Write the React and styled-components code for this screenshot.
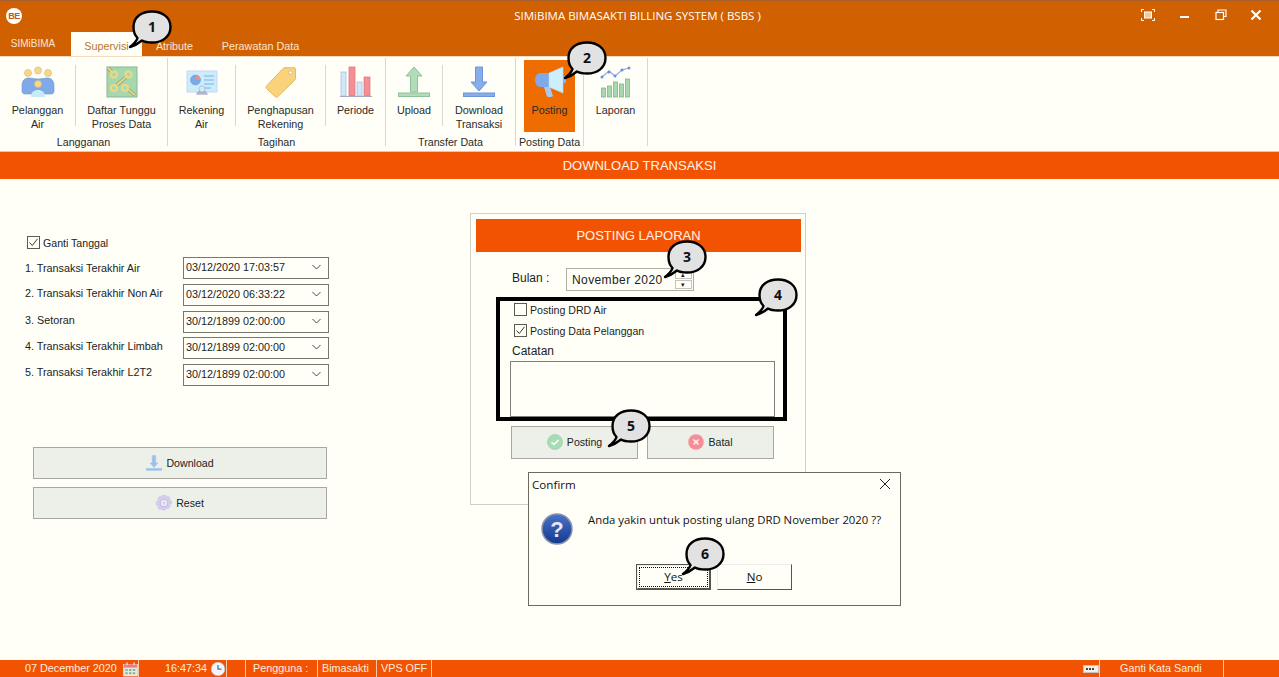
import React from 'react'
import styled, { createGlobalStyle } from 'styled-components'

const GlobalStyle = createGlobalStyle`
  html, body { margin: 0; padding: 0; background: #fffff8; }
  * { box-sizing: border-box; }
  body { font-family: "Liberation Sans", Arial, sans-serif; font-size: 11px; color: #1c1c1c; }
`

const Page = styled.div`
  position: relative;
  width: 1279px;
  height: 677px;
  overflow: hidden;
  display: flex;
  flex-direction: column;
  background: #fffff8;
`

/* title + tabs */
const TitleArea = styled.header`
  height: 56px;
  background: #d06000;
  border-top: 1px solid #a8602c;
  display: flex;
  flex-direction: column;
  flex: none;
`
const TitleRow = styled.div`
  height: 31px;
  display: flex;
  align-items: center;
  padding: 0 18px 2px 6px;
`
const Logo = styled.div`
  width: 16px;
  height: 16px;
  border-radius: 50%;
  background: #fff;
  color: #d4500c;
  font-size: 9px;
  font-weight: 700;
  text-align: center;
  line-height: 16px;
  letter-spacing: -0.5px;
  flex: none;
`
const TitleText = styled.div`
  flex: 1;
  text-align: center;
  color: #fff;
  font-family: "Open Sans", sans-serif;
  font-size: 11.5px;
  padding-right: 8px;
`
const WinControls = styled.div`
  position: absolute;
  top: 9px;
  left: 1141px;
  display: flex;
  gap: 23px;
`
const TabRow = styled.nav`
  height: 24px;
  display: flex;
  align-items: flex-end;
`
const Tab = styled.div`
  width: ${p => p.$w}px;
  height: 24px;
  margin-left: ${p => p.$ml || 0}px;
  padding-top: ${p => p.$pt ?? 8}px;
  text-align: center;
  font-size: ${p => p.$fs || 10.8}px;
  background: ${p => (p.$active ? '#fffff8' : 'transparent')};
  color: ${p => (p.$active ? '#b4762e' : '#fbe6d0')};
`

/* ribbon */
const Ribbon = styled.section`
  height: 96px;
  flex: none;
  display: flex;
  border-top: 1px solid #f7d9bd;
  border-bottom: 1px solid #e8c4a8;
  padding-top: 1px;
`
const Group = styled.div`
  width: ${p => p.$w}px;
  height: 88px;
  border-right: 1px solid #d8d8d0;
  display: flex;
  flex-direction: column;
  flex: none;
`
const GroupItems = styled.div`
  height: 75px;
  padding-top: 2px;
  display: flex;
  justify-content: ${p => p.$center ? 'center' : 'flex-start'};
`
const GroupCaption = styled.div`
  text-align: center;
  font-size: 10.7px;
  color: #2a2a2a;
  line-height: 14px;
  padding-top: 3px;
`
const Item = styled.div`
  width: ${p => p.$w}px;
  height: 72px;
  flex: none;
  display: flex;
  flex-direction: column;
  align-items: center;
  background: ${p => (p.$on ? '#ef6c00' : 'transparent')};
`
const IconSlot = styled.div`
  height: 43px;
  padding-top: 6px;
`
const ItemLabel = styled.div`
  text-align: center;
  font-size: 10.8px;
  line-height: 14px;
  color: #2a2a2a;
`
const ItemDivider = styled.div`
  width: 1px;
  height: 61px;
  margin-top: 5px;
  background: #d8d8d0;
  flex: none;
`

const Banner = styled.div`
  height: 27px;
  flex: none;
  background: #f25303;
  color: #fff4ea;
  font-size: 13px;
  line-height: 27px;
  text-align: center;
`

/* body */
const Content = styled.main`
  flex: 1;
  display: flex;
  align-items: flex-start;
  padding-left: 25px;
`
const LeftColumn = styled.div`
  width: 304px;
  padding-top: 57px;
  flex: none;
`
const CheckRow = styled.label`
  display: flex;
  align-items: center;
  gap: 3px;
  height: 13px;
  margin-left: ${p => p.$ml || 0}px;
  margin-top: ${p => p.$mt || 0}px;
  font-size: 10.6px;
  color: #222;
`
const Box = styled.span`
  width: 13px;
  height: 13px;
  border: 1px solid #5a5a50;
  background: #fffff8;
  flex: none;
  display: block;
`
const DateRows = styled.div`
  margin-top: 8px;
  display: grid;
  grid-template-columns: 158px 146px;
  row-gap: 5px;
`
const DateLabel = styled.div`
  font-size: 10.8px;
  line-height: 14px;
  padding-top: ${p => p.$pt}px;
  color: #222;
`
const DateField = styled.div`
  height: 22px;
  margin-top: ${p => p.$mt || 0}px;
  border: 1px solid #77776c;
  display: flex;
  align-items: center;
  justify-content: space-between;
  padding: 0 7px 2px 2px;
  font-size: 10.8px;
  color: #222;
`
const LeftButtons = styled.div`
  margin: 61px 0 0 8px;
  display: flex;
  flex-direction: column;
  gap: 8px;
`
const ActionButton = styled.div`
  width: ${p => p.$w}px;
  height: ${p => p.$h}px;
  background: #ecf0e8;
  border: 1px solid #a8a8a0;
  padding-bottom: 1px;
  display: flex;
  align-items: center;
  justify-content: center;
  gap: 4px;
  font-size: 10.6px;
  color: #222;
`

const Panel = styled.section`
  width: 336px;
  height: 292px;
  margin: 34px 0 0 141px;
  border: 1px solid #d0d0c6;
  padding: 5px 4px 5px 5px;
  flex: none;
`
const PanelHeader = styled.div`
  height: 33px;
  background: #f25303;
  color: #fff4ea;
  font-size: 13px;
  line-height: 33px;
  text-align: center;
`
const MonthRow = styled.div`
  margin: 16px 0 0 36px;
  display: flex;
  height: 23px;
`
const MonthLabel = styled.div`
  width: 54px;
  font-size: 12px;
  line-height: 20px;
  color: #222;
`
const MonthField = styled.div`
  width: 128px;
  border: 1px solid #b0b0a6;
  position: relative;
  padding: 4px 0 0 5px;
  font-size: 12px;
  line-height: 15px;
  letter-spacing: 0.4px;
  color: #222;
`
const Spinner = styled.div`
  position: absolute;
  right: 1px;
  top: 1px;
  bottom: 1px;
  width: 17px;
  display: flex;
  flex-direction: column;
  gap: 1px;
`
const SpinPart = styled.div`
  flex: 1;
  border: 1px solid #c4c4bc;
  background: #fffff8;
  color: #222;
  font-size: 7px;
  line-height: 7px;
  text-align: center;
`
const BlackBox = styled.div`
  width: 291px;
  height: 124px;
  margin: 6px 0 0 20px;
  border: 4px solid #000;
  padding-top: 2px;
  display: flex;
  flex-direction: column;
`
const NoteLabel = styled.div`
  margin: 7px 0 0 12px;
  font-size: 12px;
  line-height: 15px;
  color: #222;
`
const NoteArea = styled.div`
  width: 265px;
  height: 56px;
  margin: 2px 0 0 10px;
  border: 1px solid #80807a;
`
const PanelButtons = styled.div`
  margin: 5px 0 0 35px;
  display: flex;
  gap: 9px;
`

/* dialog */
const Dialog = styled.div`
  position: absolute;
  left: 528px;
  top: 472px;
  width: 373px;
  height: 134px;
  background: #fffff8;
  border: 1px solid #6b6b5d;
  font-family: "Open Sans", sans-serif;
  color: #111;
`
const DialogTitle = styled.div`
  height: 24px;
  padding: 0 9px 2px 3px;
  display: flex;
  justify-content: space-between;
  align-items: center;
  font-size: 11.6px;
`
const DialogBody = styled.div`
  height: 50px;
  padding: 16px 0 0 12px;
  display: flex;
  gap: 15px;
  font-size: 11.35px;
`
const Message = styled.div`
  margin-top: -1px;
  line-height: 15px;
  white-space: nowrap;
`
const DialogButtons = styled.div`
  margin: 17px 0 0 107px;
  display: flex;
  gap: 6px;
`
const DialogButton = styled.div`
  width: 75px;
  height: 26px;
  padding-bottom: 1px;
  background: #fffff8;
  border: ${p => (p.$focus ? '2px' : '1px')} solid;
  border-color: #eeeeea #55554c #55554c #eeeeea;
  outline: ${p => (p.$focus ? '1px solid #55554c' : 'none')};
  outline-offset: -1px;
  display: flex;
  align-items: center;
  justify-content: center;
  font-size: 11.6px;
  position: relative;
  &::before {
    content: '';
    display: ${p => (p.$focus ? 'block' : 'none')};
    position: absolute;
    inset: 1px;
    border: 1px dotted #111;
  }
  u { text-underline-offset: 1px; }
`

/* status bar */
const StatusBar = styled.footer`
  height: 17px;
  flex: none;
  background: #f25303;
  color: #ffeede;
  display: flex;
  font-size: 10.8px;
  line-height: 17px;
`
const StatusCell = styled.div`
  width: ${p => p.$w}px;
  flex: none;
  padding-left: ${p => p.$pl || 0}px;
  border-right: ${p => (p.$open ? 'none' : '1px solid #f7c9a4')};
  display: flex;
  align-items: center;
  justify-content: ${p => p.$end ? 'flex-end' : 'flex-start'};
  gap: ${p => p.$gap || 0}px;
  white-space: nowrap;
`
const StatusFill = styled.div`
  flex: 1;
`

/* callouts */
const CalloutWrap = styled.svg`
  position: absolute;
  left: ${p => p.$cx - 30}px;
  top: ${p => p.$cy - 20}px;
  overflow: visible;
`
const CalloutNum = styled.text`
  font-family: "Open Sans", sans-serif;
  font-size: 14px;
  font-weight: 700;
  fill: #111;
  text-anchor: middle;
`

const Callout = ({ cx, cy, n }) => (
  <CalloutWrap $cx={cx} $cy={cy} width="52" height="44" viewBox="0 0 52 44">
    <path
      d="M8 40 C13 36 15 33 15.5 31 C12.5 28 11.5 24.5 11.5 20 C11.5 10 19.5 4.5 30 4.5 C40.5 4.5 48.5 10.5 48.5 20 C48.5 29.5 40.5 35.5 30 35.5 C26 35.5 22.5 35 20 33.5 C17 36 13 38.5 8 40 Z"
      fill="#e2e2e2"
      stroke="#000"
      strokeWidth="2.4"
      strokeLinejoin="round"
    />
    <CalloutNum x="30" y="25">{n}</CalloutNum>
  </CalloutWrap>
)

/* drawings */
const Screenshot = () => (
  <svg width="14" height="12" viewBox="0 0 14 12" fill="none" stroke="#fff">
    <path d="M.5 3V.5H3M11 .5h2.5V3M13.5 9v2.500H11M3 11.500H.5V9" />
    <rect x="3.500" y="3" width="7" height="6" fill="#f4c9a0" />
  </svg>
)
const Minimize = () => (
  <svg width="14" height="12" viewBox="0 0 14 12"><rect x="2" y="7" width="9" height="2" fill="#fff" /></svg>
)
const Restore = () => (
  <svg width="12" height="12" viewBox="0 0 12 12" fill="none" stroke="#fff" strokeWidth="1.2">
    <rect x="1" y="3.500" width="7.500" height="7" />
    <path d="M3 3.500V1h8v6.500H8.500" />
  </svg>
)
const CloseWin = () => (
  <svg width="12" height="12" viewBox="0 0 12 12" stroke="#fff" strokeWidth="2.2"><path d="M1.500 1.500l9 9M10.500 1.500l-9 9" /></svg>
)

const PeopleIcon = () => (
  <svg width="34" height="32" viewBox="0 0 34 32">
    <g fill="#f7d788" stroke="#cdb880" strokeWidth=".6">
      <circle cx="7" cy="7" r="3.500" /><circle cx="17" cy="4.500" r="3.500" /><circle cx="27" cy="7" r="3.500" />
    </g>
    <path d="M1 20c0-6 3-8 7-8 3 0 5 1 9 1s6-1 9-1c4 0 7 2 7 8v5c0 2-1 3-3 3H4c-2 0-3-1-3-3z" fill="#7fa9e8" stroke="#6a94d4" strokeWidth=".6" />
    <circle cx="17" cy="18" r="3.600" fill="#f7d788" stroke="#cdb880" strokeWidth=".6" />
    <path d="M10 31c0-5 3-7 7-7s7 2 7 7z" fill="#c6ecf8" />
  </svg>
)
const TreeIcon = () => (
  <svg width="32" height="32" viewBox="0 0 32 32">
    <rect x="1" y="1" width="30" height="30" fill="#a6d8b0" stroke="#86b892" />
    <g stroke="#7e9c6c" strokeWidth="3.200" fill="none">
      <path d="M11 19 20 11M2 2l6 6M20 22l9 7" />
    </g>
    <g stroke="#f2d680" strokeWidth="2" fill="none">
      <path d="M11 19 20 11M2 2l6 6M20 22l9 7" />
      <circle cx="8" cy="8.500" r="3" fill="#a6d8b0" />
      <circle cx="22.500" cy="8.500" r="3" fill="#a6d8b0" />
      <circle cx="8" cy="22" r="3" fill="#a6d8b0" />
      <circle cx="19" cy="22" r="3" fill="#a6d8b0" />
    </g>
  </svg>
)
const BillIcon = () => (
  <svg width="32" height="32" viewBox="0 0 32 32">
    <rect x="1" y="5" width="30" height="21" fill="#c9edfb" stroke="#cfd2f2" />
    <circle cx="9.500" cy="14" r="5" fill="#79a9e8" stroke="#5f8fd0" strokeWidth=".5" />
    <path d="M9.500 9a5 5 0 0 1 5 5H9.500z" fill="#ee8b91" />
    <path d="M18 10h10M18 14h10M18 18h10M18 22h7" stroke="#7fb0e8" strokeWidth="1" />
    <path d="M10 29c0-4 3-5.500 6-5.500s6 1.500 6 5.500z" fill="#b0b4cf" stroke="#fffff8" strokeWidth=".6" />
    <circle cx="16" cy="23" r="3" fill="#c9edfb" stroke="#a8b4cc" strokeWidth=".7" />
  </svg>
)
const TagIcon = () => (
  <svg width="32" height="32" viewBox="0 0 32 32">
    <path d="M1.500 20 18 2.500c.5-.5 1-.8 2-.8h9c1 0 1.500.5 1.500 1.500v9c0 1-.3 1.500-.8 2L13 30.500c-1 1-2 1-3 0L1.500 22.500c-.7-.7-.7-1.700 0-2.500z" fill="#fad27c" stroke="#e6b868" />
    <circle cx="25.500" cy="6.500" r="1.700" fill="#fff" stroke="#b4a890" strokeWidth=".7" />
  </svg>
)
const ChartIcon = () => (
  <svg width="32" height="32" viewBox="0 0 32 32">
    <rect x="1" y="6" width="5" height="24" fill="#cfe9fb" stroke="#9db8d8" strokeWidth=".7" />
    <rect x="9" y="1" width="6" height="29" fill="#f58f95" stroke="#d87078" strokeWidth=".7" />
    <rect x="17" y="16" width="5" height="14" fill="#cfe9fb" stroke="#9db8d8" strokeWidth=".7" />
    <rect x="24" y="11" width="6" height="19" fill="#f58f95" stroke="#d87078" strokeWidth=".7" />
    <path d="M0 30.500h32" stroke="#a8a8c4" />
  </svg>
)
const UploadIcon = () => (
  <svg width="32" height="32" viewBox="0 0 32 32">
    <path d="M16 1 24 10h-4.500v16h-7V10H8z" fill="#b2dcb8" stroke="#90c09c" />
    <rect x=".5" y="27" width="31" height="3.500" fill="#b2dcb8" stroke="#90c09c" />
  </svg>
)
const DownloadIcon = ({ size = 32, soft }) => (
  <svg width={size} height={size} viewBox="0 0 32 32">
    <path d="M12.500 1h7v15H24l-8 9-8-9h4.500z" fill={soft ? '#9cc0ee' : '#86aeea'} stroke={soft ? '#9cc0ee' : '#6c96d8'} />
    <rect x=".5" y="27" width="31" height="3.500" fill={soft ? '#9cc0ee' : '#86aeea'} stroke={soft ? '#9cc0ee' : '#6c96d8'} />
  </svg>
)
const MegaphoneIcon = () => (
  <svg width="32" height="32" viewBox="0 0 32 32">
    <path d="M10 21h6l3 9c-1 1-4 1.500-6 .5z" fill="#a9c8f0" />
    <path d="M6 7h9v14H7c-4 0-6-3-6-7s2-7 5-7z" fill="#7fa9e8" />
    <path d="M15 7 29 1v26L15 21z" fill="#cdeefb" stroke="#bcdcf0" strokeWidth=".6" />
    <rect x="29" y="10" width="3" height="7" rx="1" fill="#88b4ea" />
  </svg>
)
const ReportIcon = () => (
  <svg width="32" height="32" viewBox="0 0 32 32">
    <g fill="#a8d8b0" stroke="#7eb48c" strokeWidth=".8">
      <rect x="1.500" y="22" width="4" height="9" /><rect x="7.500" y="20" width="4" height="11" />
      <rect x="13.500" y="16" width="4" height="15" /><rect x="19.500" y="18" width="4" height="13" />
      <rect x="25.500" y="13" width="4" height="18" />
    </g>
    <path d="M2 11 9 5l6 5 7-6 7-2" fill="none" stroke="#8fa8e0" strokeWidth="1.100" />
    <g fill="#6c8edc"><circle cx="2" cy="11" r="1.500" /><circle cx="9" cy="6" r="1.500" /><circle cx="15" cy="10" r="1.500" /><circle cx="22" cy="4" r="1.500" /><circle cx="29" cy="2" r="1.500" /></g>
  </svg>
)
const Tick = () => (
  <svg width="11" height="11" viewBox="0 0 11 11" fill="none" stroke="#3c3c34" strokeWidth="1"><path d="M1.500 5.500 4.300 8.500 9.500 1.800" /></svg>
)
const Chevron = () => (
  <svg width="9" height="6" viewBox="0 0 9 6" fill="none" stroke="#444"><path d="M.5 1 4.500 5 8.500 1" /></svg>
)
const GearIcon = () => (
  <svg width="16" height="16" viewBox="0 0 16 16">
    <path d="M6.500 0h3l.5 2.300 2.200-1 2 2-1 2.200 2.300.5v3l-2.300.5 1 2.200-2 2-2.200-1-.5 2.300h-3L6 13.700l-2.200 1-2-2 1-2.200L.5 10V6.500l2.300-1-1-2.200 2-2 2.200 1z" fill="#d7cdf0" stroke="#c2b6e4" strokeWidth=".5" />
    <circle cx="8" cy="8" r="3.800" fill="#ecf0e8" stroke="#c2b6e4" />
    <circle cx="8" cy="8" r="1.500" fill="#d7cdf0" />
  </svg>
)
const OkIcon = () => (
  <svg width="16" height="16" viewBox="0 0 16 16">
    <circle cx="8" cy="8" r="7.500" fill="#a8dcb4" stroke="#90c8a0" strokeWidth=".6" />
    <path d="M4.500 8.300 7 10.500l4.500-4.500" fill="none" stroke="#fff" strokeWidth="1.500" />
  </svg>
)
const CancelIcon = () => (
  <svg width="16" height="16" viewBox="0 0 16 16">
    <circle cx="8" cy="8" r="7.800" fill="#f58f95" />
    <path d="M5.500 5.500l5 5M10.500 5.500l-5 5" stroke="#fff" strokeWidth="1.300" />
  </svg>
)
const QuestionIcon = () => (
  <svg width="32" height="32" viewBox="0 0 32 32">
    <defs>
      <linearGradient id="qg" x1="0" y1="0" x2="0" y2="1">
        <stop offset="0" stopColor="#4a74c8" />
        <stop offset="1" stopColor="#12398e" />
      </linearGradient>
    </defs>
    <circle cx="16" cy="16" r="15" fill="url(#qg)" stroke="#8a94aa" strokeWidth="1.500" />
    <text x="16" y="24" textAnchor="middle" fontFamily="Liberation Sans, sans-serif" fontWeight="700" fontSize="22" fill="#e8e8f0">?</text>
  </svg>
)
const CloseDialog = () => (
  <svg width="12" height="12" viewBox="0 0 12 12" stroke="#222"><path d="M1 1l10 10M11 1 1 11" /></svg>
)
const CalendarIcon = () => (
  <svg width="15" height="16" viewBox="0 0 16 16">
    <rect x=".5" y="3" width="15" height="12.500" fill="#e8e8e0" stroke="#fff" strokeWidth=".5" />
    <rect x="1" y="3" width="14" height="3.500" fill="#ee7880" />
    <g fill="#7fb090"><rect x="2.500" y="8" width="2.500" height="2" /><rect x="6.500" y="8" width="2.500" height="2" /><rect x="10.500" y="8" width="2.500" height="2" /><rect x="2.500" y="11.500" width="2.500" height="2" /><rect x="6.500" y="11.500" width="2.500" height="2" /><rect x="10.500" y="11.500" width="2.500" height="2" /></g>
    <rect x="3.500" y="1" width="1.500" height="3" fill="#ddd" /><rect x="11" y="1" width="1.500" height="3" fill="#ddd" />
  </svg>
)
const ClockIcon = () => (
  <svg width="14" height="14" viewBox="0 0 14 14">
    <circle cx="7" cy="7" r="6.800" fill="#f2f6fb" stroke="#b6c8e0" strokeWidth=".5" />
    <path d="M7 3v4.200h3.500" fill="none" stroke="#4a6a9c" strokeWidth="1.200" />
  </svg>
)
const KeyboardIcon = () => (
  <svg width="16" height="8" viewBox="0 0 16 8">
    <rect x=".5" y=".5" width="15" height="7" fill="#f0efe8" stroke="#c9c2b8" />
    <g fill="#444"><rect x="3" y="3" width="2" height="2" /><rect x="6" y="3" width="2" height="2" /><rect x="9" y="3" width="2" height="2" /></g>
  </svg>
)

const dateRows = [
  { label: '1. Transaksi Terakhir Air', value: '03/12/2020 17:03:57', pt: 4 },
  { label: '2. Transaksi Terakhir Non Air', value: '03/12/2020 06:33:22', pt: 2 },
  { label: '3. Setoran', value: '30/12/1899 02:00:00', pt: 2 },
  { label: '4. Transaksi Terakhir Limbah', value: '30/12/1899 02:00:00', pt: 1, mt: -1 },
  { label: '5. Transaksi Terakhir L2T2', value: '30/12/1899 02:00:00', pt: 1 },
]

const callouts = [
  { n: 1, cx: 152, cy: 27 },
  { n: 2, cx: 587, cy: 58 },
  { n: 3, cx: 687, cy: 257 },
  { n: 4, cx: 778, cy: 295 },
  { n: 5, cx: 631, cy: 426 },
  { n: 6, cx: 705, cy: 554 },
]

const RibbonItem = ({ w, icon, on, children }) => (
  <Item $w={w} $on={on}>
    <IconSlot>{icon}</IconSlot>
    <ItemLabel>{children}</ItemLabel>
  </Item>
)

const App = () => {
  return (
    <Page>
      <GlobalStyle />
      <TitleArea>
        <TitleRow>
          <Logo>BE</Logo>
          <TitleText>SIMiBIMA BIMASAKTI BILLING SYSTEM ( BSBS )</TitleText>
        </TitleRow>
        <TabRow>
          <Tab $w={66} $pt={6} $fs={10}>SIMiBIMA</Tab>
          <Tab $w={71} $ml={5} $active>Supervisi</Tab>
          <Tab $w={65}>Atribute</Tab>
          <Tab $w={105} $ml={1}>Perawatan Data</Tab>
        </TabRow>
      </TitleArea>
      <WinControls>
        <Screenshot /><Minimize /><Restore /><CloseWin />
      </WinControls>

      <Ribbon>
        <Group $w={168}>
          <GroupItems>
            <RibbonItem w={75} icon={<PeopleIcon />}>Pelanggan<br />Air</RibbonItem>
            <ItemDivider />
            <RibbonItem w={91} icon={<TreeIcon />}>Daftar Tunggu<br />Proses Data</RibbonItem>
          </GroupItems>
          <GroupCaption>Langganan</GroupCaption>
        </Group>
        <Group $w={218}>
          <GroupItems>
            <RibbonItem w={67} icon={<BillIcon />}>Rekening<br />Air</RibbonItem>
            <ItemDivider />
            <RibbonItem w={89} icon={<TagIcon />}>Penghapusan<br />Rekening</RibbonItem>
            <ItemDivider />
            <RibbonItem w={59} icon={<ChartIcon />}>Periode</RibbonItem>
          </GroupItems>
          <GroupCaption>Tagihan</GroupCaption>
        </Group>
        <Group $w={130}>
          <GroupItems>
            <RibbonItem w={56} icon={<UploadIcon />}>Upload</RibbonItem>
            <ItemDivider />
            <RibbonItem w={72} icon={<DownloadIcon />}>Download<br />Transaksi</RibbonItem>
          </GroupItems>
          <GroupCaption>Transfer Data</GroupCaption>
        </Group>
        <Group $w={68}>
          <GroupItems $center>
            <RibbonItem w={51} on icon={<MegaphoneIcon />}>Posting</RibbonItem>
          </GroupItems>
          <GroupCaption>Posting Data</GroupCaption>
        </Group>
        <Group $w={64}>
          <GroupItems>
            <RibbonItem w={63} icon={<ReportIcon />}>Laporan</RibbonItem>
          </GroupItems>
        </Group>
      </Ribbon>

      <Banner>DOWNLOAD TRANSAKSI</Banner>

      <Content>
        <LeftColumn>
          <CheckRow $ml={2}>
            <Box><Tick /></Box>
            Ganti Tanggal
          </CheckRow>
          <DateRows>
            {dateRows.map(r => (
              <React.Fragment key={r.label}>
                <DateLabel $pt={r.pt}>{r.label}</DateLabel>
                <DateField $mt={r.mt}>{r.value}<Chevron /></DateField>
              </React.Fragment>
            ))}
          </DateRows>
          <LeftButtons>
            <ActionButton $w={294} $h={32}><DownloadIcon size={16} soft /> Download</ActionButton>
            <ActionButton $w={294} $h={32}><GearIcon /> Reset</ActionButton>
          </LeftButtons>
        </LeftColumn>

        <Panel>
          <PanelHeader>POSTING LAPORAN</PanelHeader>
          <MonthRow>
            <MonthLabel>Bulan :</MonthLabel>
            <MonthField>
              November 2020
              <Spinner>
                <SpinPart>▴</SpinPart>
                <SpinPart>▾</SpinPart>
              </Spinner>
            </MonthField>
          </MonthRow>
          <BlackBox>
            <CheckRow $ml={14}><Box /> Posting DRD Air</CheckRow>
            <CheckRow $ml={14} $mt={8}><Box><Tick /></Box> Posting Data Pelanggan</CheckRow>
            <NoteLabel>Catatan</NoteLabel>
            <NoteArea />
          </BlackBox>
          <PanelButtons>
            <ActionButton $w={127} $h={33}><OkIcon /> Posting</ActionButton>
            <ActionButton $w={127} $h={33}><CancelIcon /> Batal</ActionButton>
          </PanelButtons>
        </Panel>
      </Content>

      <StatusBar>
        <StatusCell $w={139} $pl={25} $gap={6}>07 December 2020 <CalendarIcon /></StatusCell>
        <StatusCell $w={88} $pl={26} $gap={4}>16:47:34 <ClockIcon /></StatusCell>
        <StatusCell $w={19} />
        <StatusCell $w={72} $pl={7}>Pengguna :</StatusCell>
        <StatusCell $w={59} $pl={4}>Bimasakti</StatusCell>
        <StatusCell $w={55} $pl={4}>VPS OFF</StatusCell>
        <StatusFill />
        <StatusCell $w={20} $end><KeyboardIcon /></StatusCell>
        <StatusCell $w={124} $pl={20}>Ganti Kata Sandi</StatusCell>
        <StatusCell $w={55} $open />
      </StatusBar>

      <Dialog>
        <DialogTitle>Confirm <CloseDialog /></DialogTitle>
        <DialogBody>
          <QuestionIcon />
          <Message>Anda yakin untuk posting ulang DRD November 2020 ??</Message>
        </DialogBody>
        <DialogButtons>
          <DialogButton $focus><span><u>Y</u>es</span></DialogButton>
          <DialogButton><span><u>N</u>o</span></DialogButton>
        </DialogButtons>
      </Dialog>

      {callouts.map(c => <Callout key={c.n} {...c} />)}
    </Page>
  )
}

export default App
